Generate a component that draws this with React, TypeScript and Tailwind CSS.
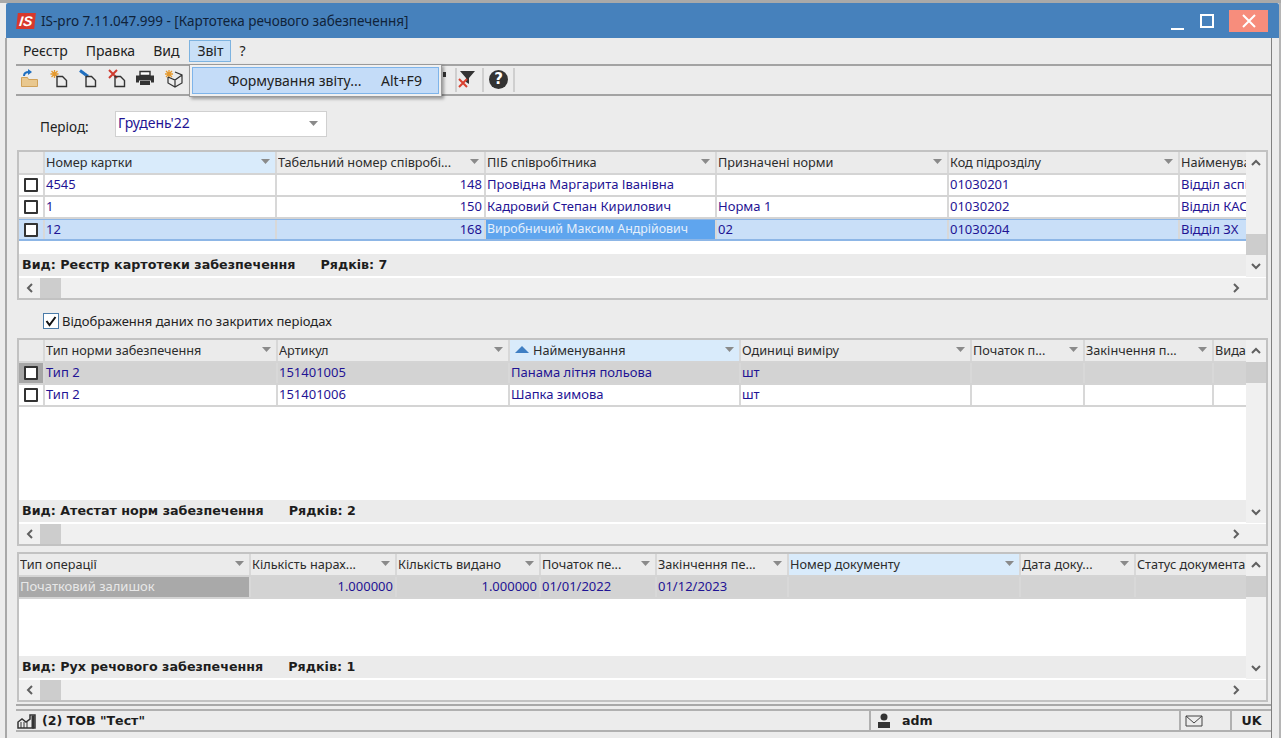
import React from 'react';

type Cell = { t?: string; r?: boolean; c?: string };
type Col = { w: string; t: string; hi?: boolean; sort?: boolean };
type Row = { cells: Cell[]; bg?: string; sel?: boolean; markerBg?: string };

const boldFont = { fontFamily: '"DejaVu Sans", sans-serif' };

const Tri = () => (
  <svg width="9" height="5" viewBox="0 0 9 5" className="shrink-0"><path d="M0 0h9L4.500 5z" fill="#8a8a8a" /></svg>
);
const Chev = ({ d }: { d: 'u' | 'd' | 'l' | 'r' }) => {
  const p = { u: 'M2 8l4-4 4 4', d: 'M2 4l4 4 4-4', l: 'M8 2L4 6l4 4', r: 'M4 2l4 4-4 4' }[d];
  return (
    <svg width="12" height="12" viewBox="0 0 12 12" className="shrink-0">
      <path d={p} fill="none" stroke="#606060" strokeWidth="2" />
    </svg>
  );
};
const Box = () => <div className="w-[14px] h-[14px] border-2 border-[#333] bg-white rounded-[1px]" />;

function Grid({ cols, rows, marker, footer, count, gap, thumb, h, outer }: {
  cols: Col[]; rows: Row[]; marker?: boolean; footer: string; count: string; gap: string; thumb: string; h: string; outer: string;
}) {
  return (
    <div className={`${outer} ${h} ml-[10px] w-[1251px] border-2 border-[#c2c2c2] flex flex-col bg-[#f0f0f0] shrink-0`}>
      <div className="flex flex-1 min-h-0">
        <div className="w-[1227px] flex flex-col overflow-hidden">
          <div className="flex h-[23px] shrink-0 border-b-2 border-[#d4d4d4] bg-[#ebebeb] text-[12.700px]">
            {marker && <div className="w-[26px] shrink-0 border-r-2 border-[#d8d8d8]" />}
            {cols.map((c, i) => (
              <div key={i} className={`${c.w} shrink-0 flex items-center pl-[1px] pr-[5px] pb-[2px] border-r-2 border-[#d8d8d8] ${c.hi ? 'bg-[#d9ebfb]' : ''}`}>
                {c.sort && (
                  <svg width="16" height="9" viewBox="0 0 16 9" className="shrink-0 mx-[3px]"><path d="M1 8L8 1l7 7z" fill="#3f7fc4" /></svg>
                )}
                <span className="flex-1 min-w-0 overflow-hidden whitespace-nowrap text-[#2c2c2c]">{c.t}</span>
                <Tri />
              </div>
            ))}
          </div>
          {rows.map((r, i) => (
            <div key={i} className={`flex h-[22px] shrink-0 border-b-2 text-[13px] ${r.sel ? 'border-[#8db6e6] border-t border-t-[#8db6e6]' : 'border-[#d4d4d4]'} ${r.bg || 'bg-white'}`}>
              {marker && (
                <div className={`w-[26px] shrink-0 flex items-center justify-center border-r-2 border-[#d8d8d8] ${r.markerBg || ''}`}><Box /></div>
              )}
              {cols.map((c, j) => {
                const x = r.cells[j] || {};
                return (
                  <div key={j} className={`${c.w} shrink-0 flex items-center pb-[2px] border-r-2 border-[#d8d8d8] overflow-hidden whitespace-nowrap ${x.r ? 'justify-end pr-[2px]' : 'pl-[1px]'} ${x.c || 'text-[#1f1494]'}`}>
                    {x.t}
                  </div>
                );
              })}
            </div>
          ))}
          <div className="flex-1 bg-white" />
          <div className="h-[23px] shrink-0 bg-[#ebebeb] border-b border-white flex items-center pl-[3px] font-bold text-[12.700px] text-[#1d1d1d]" style={boldFont}>
            <span className={gap}>{footer}</span>
            <span>{count}</span>
          </div>
        </div>
        <div className="w-[20px] shrink-0 flex flex-col items-center relative bg-[#f0f0f0]">
          <div className="h-[22px] w-full flex items-center justify-center shrink-0"><Chev d="u" /></div>
          <div className={`${thumb} w-full h-[21px] bg-[#cdcdcd] shrink-0`} />
          <div className="flex-1" />
          <div className="h-[22px] w-full flex items-center justify-center shrink-0"><Chev d="d" /></div>
        </div>
      </div>
      <div className="h-[21px] shrink-0 flex items-center bg-[#f0f0f0] border-t border-white">
        <div className="w-[21px] flex justify-center shrink-0"><Chev d="l" /></div>
        <div className="w-[21px] h-[20px] bg-[#cdcdcd] shrink-0" />
        <div className="flex-1" />
        <div className="w-[60px] pr-[24px] flex justify-end shrink-0"><Chev d="r" /></div>
      </div>
    </div>
  );
}

const cols1: Col[] = [
  { w: 'w-[232px]', t: 'Номер картки', hi: true },
  { w: 'w-[209px]', t: 'Табельний номер співробі...' },
  { w: 'w-[231px]', t: 'ПІБ співробітника' },
  { w: 'w-[232px]', t: 'Призначені норми' },
  { w: 'w-[231px]', t: 'Код підрозділу' },
  { w: 'w-[120px]', t: 'Найменування підрозділу' },
];
const rows1: Row[] = [
  { cells: [{ t: '4545' }, { t: '148', r: true }, { t: 'Провідна Маргарита Іванівна' }, {}, { t: '01030201' }, { t: 'Відділ аспірантури' }] },
  { cells: [{ t: '1' }, { t: '150', r: true }, { t: 'Кадровий Степан Кирилович' }, { t: 'Норма 1' }, { t: '01030202' }, { t: 'Відділ КАСОВИЙ' }] },
  { sel: true, bg: 'bg-[#c9dff8]', cells: [{ t: '12' }, { t: '168', r: true }, { t: 'Виробничий Максим Андрійович', c: 'bg-[#5fa5ee] text-[#e6f0fb] text-[12.400px]' }, { t: '02' }, { t: '01030204' }, { t: 'Відділ ЗХ' }] },
];
const cols2: Col[] = [
  { w: 'w-[233px]', t: 'Тип норми забезпечення' },
  { w: 'w-[232px]', t: 'Артикул' },
  { w: 'w-[231px]', t: 'Найменування', hi: true, sort: true },
  { w: 'w-[231px]', t: 'Одиниці виміру' },
  { w: 'w-[113px]', t: 'Початок п...' },
  { w: 'w-[129px]', t: 'Закінчення п...' },
  { w: 'w-[60px]', t: 'Видано' },
];
const rows2: Row[] = [
  { bg: 'bg-[#d3d3d3]', markerBg: 'bg-[#a6a6a6]', cells: [{ t: 'Тип 2' }, { t: '151401005' }, { t: 'Панама літня польова' }, { t: 'шт' }, {}, {}, {}] },
  { cells: [{ t: 'Тип 2' }, { t: '151401006' }, { t: 'Шапка зимова' }, { t: 'шт' }, {}, {}, {}] },
];
const cols3: Col[] = [
  { w: 'w-[232px]', t: 'Тип операції' },
  { w: 'w-[146px]', t: 'Кількість нарах...' },
  { w: 'w-[144px]', t: 'Кількість видано' },
  { w: 'w-[116px]', t: 'Початок пе...' },
  { w: 'w-[132px]', t: 'Закінчення пе...' },
  { w: 'w-[232px]', t: 'Номер документу', hi: true },
  { w: 'w-[115px]', t: 'Дата доку...' },
  { w: 'w-[130px]', t: 'Статус документа' },
];
const rows3: Row[] = [
  { bg: 'bg-[#d3d3d3]', cells: [{ t: 'Початковий залишок', c: 'bg-[#a9a9a9] text-[#e8e8e8]' }, { t: '1.000000', r: true }, { t: '1.000000', r: true }, { t: '01/01/2022' }, { t: '01/12/2023' }, {}, {}, {}] },
];

const Ic = ({ children }: { children: React.ReactNode }) => (
  <svg width="20" height="20" viewBox="0 0 20 20" className="shrink-0 mb-[2px]">{children}</svg>
);
const Doc = () => <path d="M8 7.500h5.500l4 4v6H8z" fill="none" stroke="#333" strokeWidth="1.400" />;
const Star = ({ x, y }: { x: number; y: number }) => (
  <g stroke="#e59a2f" strokeWidth="1.300"><path d={`M${x - 4} ${y}h8M${x} ${y - 4}v8M${x - 3} ${y - 3}l6 6M${x + 3} ${y - 3}l-6 6`} /></g>
);

export default function App() {
  return (
    <div className="w-[1281px] h-[738px] relative overflow-hidden bg-[#ececec] border-t-[3px] border-[#a9a9a9] flex flex-col text-[13px] leading-[16px]" style={{ fontFamily: '"Noto Sans", sans-serif' }}>
      <div className="h-[35px] shrink-0 ml-[6px] mr-[2px] bg-[#4681bc] flex items-center rounded-t-[2px]">
        <div className="ml-[11px] w-[18px] h-[16px] bg-[#d8382c] flex items-center justify-center shrink-0 text-white font-bold italic text-[14px] -skew-x-6" style={{ fontFamily: '"Liberation Sans", sans-serif' }}>IS</div>
        <span className="ml-[6px] text-[13.500px] text-[#10233a]">IS-pro 7.11.047.999 - [Картотека речового забезпечення]</span>
        <div className="flex-1" />
        <div className="w-[13px] h-[2px] bg-white mt-[16px]" />
        <div className="w-[14px] h-[14px] border-2 border-white ml-[16px]" />
        <div className="w-[39px] h-[22px] bg-[#f78d7c] ml-[15px] mr-[11px] flex items-center justify-center">
          <svg width="14" height="14" viewBox="0 0 14 14"><path d="M1 1l12 12M13 1L1 13" stroke="#fff" strokeWidth="2" /></svg>
        </div>
      </div>

      <div className="flex-1 ml-[5px] w-[1267px] border-l-2 border-r border-l-[#a8a8a8] border-r-[#808080] flex flex-col min-h-0">
        <div className="h-[26px] shrink-0 flex items-center pl-[10px] text-[14px]">
          <span className="px-[6px] text-[#222]">Реєстр</span>
          <span className="ml-[6px] px-[6px] text-[#222]">Правка</span>
          <span className="ml-[6px] px-[6px] text-[#222]">Вид</span>
          <span className="ml-[4px] h-[22px] w-[42px] flex items-center justify-center bg-[#c9e0f7] border border-[#7db3e0] text-[#222]">Звіт</span>
          <span className="ml-[8px] text-[#222]">?</span>
        </div>
        <div className="ml-[9px] h-[32px] shrink-0 border-t-2 border-b-2 border-[#a3a3a3] flex items-center">
          <div className="w-[28px] flex justify-center">
            <Ic>
              <path d="M1.500 8.500h6l1 2h9v7h-16z" fill="#e9c88f" stroke="#d0a25a" />
              <path d="M4 7c0-3 2-4 5-4" fill="none" stroke="#1f6fc0" strokeWidth="2" />
              <path d="M8 0l4 3-4 3z" fill="#1f6fc0" />
            </Ic>
          </div>
          <div className="w-[29px] flex justify-center"><Ic><Star x={5.500} y={5} /><Doc /></Ic></div>
          <div className="w-[30px] flex justify-center">
            <Ic><path d="M2 1.500l6 4.500" stroke="#1f6fc0" strokeWidth="3" /><path d="M7 4l4 2-3 3z" fill="#1f6fc0" /><Doc /></Ic>
          </div>
          <div className="w-[28px] flex justify-center">
            <Ic><path d="M2 1l8 8M10 1L2 9" stroke="#cf3a2e" strokeWidth="2" /><Doc /></Ic>
          </div>
          <div className="w-[28px] flex justify-center">
            <Ic>
              <path d="M5 2.500h10v4H5z" fill="#fff" stroke="#333" strokeWidth="1.400" />
              <path d="M1 6.500h18v7h-3v-2H4v2H1z" fill="#333" />
              <path d="M5 12h10v4H5z" fill="#333" />
            </Ic>
          </div>
          <div className="w-[30px] flex justify-center">
            <Ic><Star x={5} y={5} /><path d="M11 3l7 3v8l-7 4-7-4V8M4 8l7 3 7-5M11 11v7" fill="none" stroke="#333" strokeWidth="1.200" /></Ic>
          </div>
          <div className="ml-[254px] w-[3px] h-[5px] mb-[12px] bg-[#333]" />
          <div className="ml-[9px] w-[2px] h-[24px] bg-[#cfcfcf]" />
          <div className="w-[25px] flex justify-start">
            <Ic>
              <path d="M3 2h15l-6 7v6l-3-2V9z" fill="#333" />
              <path d="M2 10l8 8M10 10l-8 8" stroke="#d8402f" strokeWidth="2" />
            </Ic>
          </div>
          <div className="w-[2px] h-[24px] bg-[#cfcfcf]" />
          <div className="w-[29px] flex justify-center">
            <div className="w-[19px] h-[19px] mb-[2px] rounded-full bg-[#333] text-white font-bold text-[15px] flex items-center justify-center" style={boldFont}>?</div>
          </div>
          <div className="w-[2px] h-[24px] bg-[#cfcfcf]" />
        </div>

        <div className="h-[26px] mt-[15px] ml-[33px] shrink-0 flex items-center">
          <span className="w-[75px] text-[13.500px] text-[#222] mt-[6px]">Період:</span>
          <div className="w-[212px] h-[26px] bg-white border border-[#d0d0d0] flex items-center pl-[2px] pr-[8px] pb-[2px] text-[#1f1494] text-[14px]">
            <span className="flex-1">Грудень'22</span>
            <Tri />
          </div>
        </div>

        <Grid outer="mt-[13px]" h="h-[150px]" marker cols={cols1} rows={rows1} footer="Вид: Реєстр картотеки забезпечення" count="Рядків: 7" gap="mr-[25px]" thumb="mt-[60px]" />

        <div className="h-[16px] mt-[13px] ml-[36px] shrink-0 flex items-center">
          <div className="w-[16px] h-[16px] border border-[#4a7ba8] bg-white flex items-center justify-center shrink-0">
            <svg width="12" height="12" viewBox="0 0 12 12"><path d="M1.500 6l3 4 6-8" fill="none" stroke="#111" strokeWidth="2" /></svg>
          </div>
          <span className="ml-[3px] text-[#222]">Відображення даних по закритих періодах</span>
        </div>

        <Grid outer="mt-[9px]" h="h-[208px]" marker cols={cols2} rows={rows2} footer="Вид: Атестат норм забезпечення" count="Рядків: 2" gap="mr-[25px]" thumb="mt-0" />
        <Grid outer="mt-[6px]" h="h-[150px]" cols={cols3} rows={rows3} footer="Вид: Рух речового забезпечення" count="Рядків: 1" gap="mr-[25px]" thumb="mt-0" />

        <div className="ml-[9px] mt-[2px] h-[23px] shrink-0 border-t-2 border-[#a8a8a8] pt-[3px] box-content flex font-bold text-[12.600px] text-[#1d1d1d]" style={boldFont}>
          <div className="w-[855px] h-[23px] border-t-2 border-b-2 border-r-2 border-[#b0b0b0] flex items-center">
            <svg width="20" height="16" viewBox="0 0 20 16" className="ml-[1px] shrink-0">
              <path d="M1 15V9l4-3 4 3 4-3v-4h5v13z" fill="none" stroke="#333" strokeWidth="1.500" />
              <path d="M4 9v6M7 9v6M10 9v6M15 3h2v12h-2z" stroke="#333" fill="#333" />
            </svg>
            <span className="ml-[5px]">(2) ТОВ "Тест"</span>
          </div>
          <div className="w-[310px] h-[23px] border-t-2 border-b-2 border-r-2 border-[#b0b0b0] flex items-center">
            <svg width="14" height="16" viewBox="0 0 14 16" className="ml-[6px] shrink-0">
              <circle cx="7" cy="4" r="3.500" fill="#333" /><path d="M1 15V9h12v6z" fill="#333" />
            </svg>
            <span className="ml-[11px]">adm</span>
          </div>
          <div className="w-[51px] h-[23px] border-t-2 border-b-2 border-r-2 border-[#b0b0b0] flex items-center">
            <svg width="18" height="12" viewBox="0 0 18 12" className="ml-[4px]"><path d="M1 1h16v10H1zM1 1l8 7 8-7" fill="none" stroke="#444" /></svg>
          </div>
          <div className="w-[39px] h-[23px] border-t-2 border-b-2 border-[#b0b0b0] flex items-center justify-center">UK</div>
        </div>
      </div>
      <div className="absolute right-0 top-0 bottom-0 w-[2px] bg-[#b5b5b5]" />

      <div className="absolute left-[189px] top-[61px] w-[253px] h-[33px] bg-[#f0f0f0] border border-[#9a9a9a] shadow-[2px_2px_3px_rgba(0,0,0,0.35)] p-[2px] text-[14px]">
        <div className="h-full bg-[#c4dcf8] border border-[#7eb4ea] flex items-center pl-[35px] text-[#222]">
          <span className="w-[153px]">Формування звіту...</span>
          <span>Alt+F9</span>
        </div>
      </div>
    </div>
  );
}
